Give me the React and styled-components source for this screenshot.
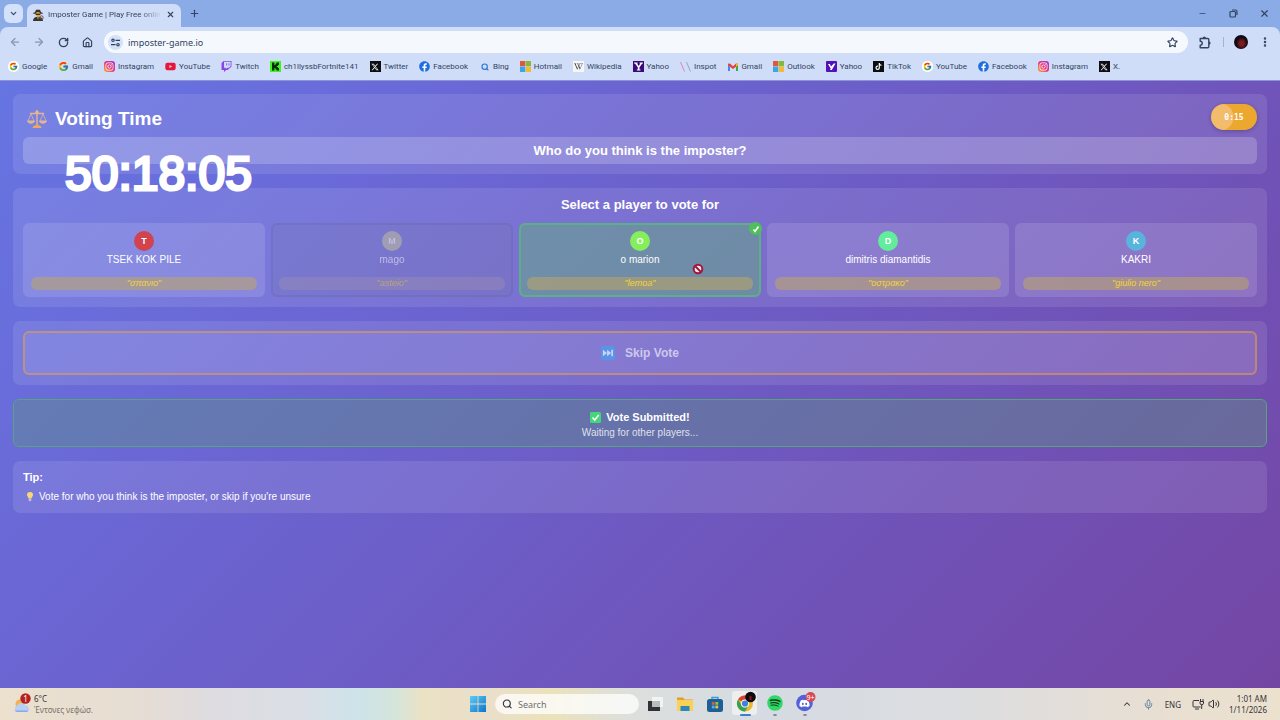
import React, { useState } from "react";
import styled, { createGlobalStyle, css } from "styled-components";
import { FcGoogle } from "react-icons/fc";
import {
  FaDiscord,
  FaFacebook,
  FaInstagram,
  FaSpotify,
  FaTiktok,
  FaTwitch,
  FaWikipediaW,
  FaYoutube,
} from "react-icons/fa";
import { FaXTwitter } from "react-icons/fa6";
import {
  ArrowLeft,
  ArrowRight,
  ChevronDown,
  ChevronUp,
  EllipsisVertical,
  House,
  Mic,
  Minus,
  Plus,
  RotateCw,
  Search,
  Star,
  Volume2,
  X,
} from "lucide-react";

const GlobalStyle = createGlobalStyle`
  * {
    box-sizing: border-box;
  }

  body {
    margin: 0;
    font-family: "Liberation Sans", Arial, sans-serif;
  }

  button,
  input {
    margin: 0;
    padding: 0;
    border: 0;
    background: none;
    color: inherit;
    font: inherit;
  }

  h1, h2, h3, p {
    margin: 0;
    padding: 0;
  }
`;

const Desktop = styled.div`
  min-height: 100vh;
  display: flex;
  flex-direction: column;
`;

/* browser window */

const BrowserChrome = styled.header`
  background-color: #8babe6;
  color: #33435f;
  font-family: Roboto, "Noto Sans", sans-serif;
  font-size: 8px;
`;

const TabStrip = styled.div`
  height: 27px;
  padding-left: 4px;
  display: flex;
  align-items: center;
`;

const TabSearch = styled.button`
  width: 19px;
  height: 19px;
  border-radius: 6px;
  background-color: #d3e1fa;
  display: grid;
  place-items: center;
`;

const Tab = styled.div`
  align-self: flex-end;
  width: 154px;
  height: 23px;
  margin-left: 4px;
  padding: 0 6px 2px 5px;
  border-radius: 7px 7px 0 0;
  background-color: #cfddf8;
  display: flex;
  align-items: center;
  gap: 4px;
`;

const TabTitle = styled.span`
  flex: 1;
  white-space: nowrap;
  mask-image: linear-gradient(90deg, #000 80%, transparent);
`;

const IconButton = styled.button`
  width: ${(props) => props.$width || 24}px;
  height: 24px;
  flex: none;
  display: grid;
  place-items: center;
  opacity: ${(props) => (props.disabled ? 0.45 : 1)};
`;

const TabClose = styled.button`
  display: grid;
  place-items: center;
`;

const WindowControls = styled.div`
  margin-left: auto;
  display: flex;
`;

const Toolbar = styled.div`
  height: 30px;
  padding: 0 3px;
  background-color: #cfddf8;
  border-radius: 8px 8px 0 0;
  display: flex;
  align-items: center;
`;

const AddressBar = styled.form`
  flex: 1;
  height: 22px;
  margin: 0 5px;
  padding: 0 10px 0 4px;
  border-radius: 11px;
  background-color: #f5f9fe;
  display: flex;
  align-items: center;
  gap: 5px;
`;

const SiteInfo = styled.span`
  width: 15px;
  height: 15px;
  border-radius: 50%;
  background-color: #d3e1f9;
  display: grid;
  place-items: center;
`;

const AddressInput = styled.input`
  flex: 1;
  font-family: "Noto Sans", sans-serif;
  font-size: 9px;
  outline: none;
`;

const Divider = styled.span`
  width: 1px;
  height: 10px;
  margin: 0 5px 0 6px;
  background-color: #9fb4d8;
`;

const ProfilePhoto = styled.span`
  width: 14px;
  height: 14px;
  border-radius: 50%;
  background: radial-gradient(ellipse at 55% 60%, #7a1b20 0 20%, #120a10 50%);
`;

const BookmarksBar = styled.nav`
  height: 24px;
  padding: 0 8px 4px;
  border-bottom: 1px solid #8c93d9;
  background-color: #cfddf8;
  display: flex;
  align-items: center;
  gap: 11px;
  overflow: hidden;
`;

const Bookmark = styled.a`
  display: flex;
  align-items: center;
  gap: 3px;
  color: inherit;
  text-decoration: none;
  white-space: nowrap;
`;

const Favicon = styled.span`
  width: 11px;
  height: 11px;
  flex: none;
  border-radius: ${(props) => props.$radius || 0}px;
  background: ${(props) => props.$bg || "transparent"};
  color: ${(props) => props.$color || "inherit"};
  display: grid;
  place-items: center;
`;

/* game page */

const Page = styled.main`
  flex: 1;
  padding: 13px;
  background: linear-gradient(
    135deg,
    #6675e2 0%,
    #6a6ad8 22%,
    #6c5fca 45%,
    #7053b8 70%,
    #7446a4 100%
  );
  color: #fff;
  display: flex;
  flex-direction: column;
  gap: 14px;
`;

const Panel = styled.section`
  padding: 10px;
  border-radius: 7px;
  background-color: rgba(255, 255, 255, 0.1);
`;

const TitleRow = styled.div`
  height: 26px;
  display: flex;
  justify-content: space-between;
  align-items: flex-end;
`;

const Title = styled.h1`
  padding-left: 4px;
  display: flex;
  align-items: center;
  gap: 8px;
  font-size: 19px;
  line-height: 23px;
`;

const Timer = styled.div`
  width: 46px;
  height: 26px;
  border-radius: 13px;
  background: radial-gradient(circle at 9px 13px, #f3bc6b 13px, #eca82e 14px);
  box-shadow: 0 1px 4px rgba(0, 0, 0, 0.25);
  font: bold 8px/27px "DejaVu Sans Mono", monospace;
  text-align: center;
`;

const Question = styled.p`
  margin-top: 7px;
  border-radius: 6px;
  background-color: rgba(255, 255, 255, 0.2);
  font-size: 13px;
  font-weight: bold;
  line-height: 27px;
  text-align: center;
`;

const SectionTitle = styled.h2`
  margin-bottom: 12px;
  font-size: 13px;
  line-height: 13px;
  text-align: center;
`;

const PlayerGrid = styled.div`
  display: grid;
  grid-template-columns: repeat(5, 1fr);
  gap: 6px;
`;

const PlayerCard = styled.button`
  position: relative;
  height: 74px;
  padding: 6px;
  border: 2px solid transparent;
  border-radius: 6px;
  background-color: rgba(255, 255, 255, 0.12);
  display: flex;
  flex-direction: column;
  align-items: center;

  ${(props) =>
    props.disabled &&
    css`
      border-color: rgba(90, 90, 140, 0.2);
      background-color: rgba(120, 120, 140, 0.14);
    `}

  ${(props) =>
    props.$selected &&
    css`
      border-color: #5bb183;
      background-color: rgba(100, 170, 130, 0.5);
    `}
`;

const CardBody = styled.span`
  width: 100%;
  display: flex;
  flex-direction: column;
  align-items: center;
  opacity: ${(props) => (props.$dim ? 0.5 : 1)};
`;

const Avatar = styled.span`
  width: 20px;
  height: 20px;
  border-radius: 50%;
  background-color: ${(props) => props.$color};
  font-size: 9px;
  font-weight: bold;
  line-height: 20px;
  text-align: center;
`;

const PlayerName = styled.span`
  margin-top: 3px;
  font-size: 10px;
  line-height: 12px;
`;

const Hint = styled.span`
  width: 100%;
  margin-top: 11px;
  border-radius: 6px;
  background-color: ${(props) =>
    props.$dim ? "rgba(190, 170, 150, 0.4)" : "rgba(190, 165, 100, 0.55)"};
  color: #f2d438;
  font-size: 9px;
  font-style: italic;
  line-height: 13px;
  text-align: center;
`;

const CheckBadge = styled.span`
  position: absolute;
  top: -3px;
  right: -3px;
  width: 13px;
  height: 13px;
  border-radius: 50%;
  background-color: #4fbf5c;
  display: grid;
  place-items: center;
`;

const BlockedCursor = styled.svg`
  position: absolute;
  left: 72%;
  top: 54%;
`;

const SkipButton = styled.button`
  width: 100%;
  height: 44px;
  border: 2px solid rgba(232, 156, 62, 0.55);
  border-radius: 6px;
  background-color: rgba(255, 255, 255, 0.08);
  color: rgba(255, 255, 255, 0.6);
  display: flex;
  justify-content: center;
  align-items: center;
  gap: 10px;
  font-size: 12px;
  font-weight: bold;
`;

const Submitted = styled.section`
  height: 48px;
  padding-top: 10px;
  border: 1px solid #56a57c;
  border-radius: 6px;
  background-color: rgba(94, 145, 130, 0.42);
  text-align: center;
`;

const SubmittedTitle = styled.h3`
  display: flex;
  justify-content: center;
  align-items: center;
  gap: 5px;
  font-size: 11px;
  line-height: 15px;
`;

const Waiting = styled.p`
  color: rgba(255, 255, 255, 0.8);
  font-size: 10px;
  line-height: 15px;
`;

const Tip = styled(Panel)`
  h3 {
    font-size: 11px;
    line-height: 13px;
  }

  p {
    margin-top: 6px;
    display: flex;
    align-items: center;
    gap: 4px;
    font-size: 10px;
    line-height: 13px;
  }
`;

const StreamClock = styled.div`
  position: absolute;
  left: 65px;
  top: 148px;
  color: #fff;
  font-size: 48px;
  line-height: 52px;
  -webkit-text-stroke: 3px #fff;
`;

/* taskbar */

const Taskbar = styled.footer`
  height: 32px;
  padding: 0 13px;
  background: linear-gradient(
    90deg,
    #ece1cd 0%,
    #e6ddd4 11%,
    #dedce1 17%,
    #dadfe6 24%,
    #cde3ea 28%,
    #d5e5da 31%,
    #ebe1c4 33%,
    #eadfca 38%,
    #ebe2bb 43%,
    #dcdfdc 49%,
    #d5dbe2 60%,
    #dcdde0 75%,
    #e8dfd3 90%,
    #ece1cd 100%
  );
  color: #33343a;
  font-family: "Noto Sans", sans-serif;
  font-size: 8px;
  line-height: 11px;
  display: grid;
  grid-template-columns: 1fr auto 1fr;
  align-items: center;
`;

const Weather = styled.div`
  display: flex;
  align-items: center;
  gap: 3px;

  small {
    display: block;
    color: #77726c;
    font-size: 8px;
  }
`;

const Apps = styled.div`
  padding-left: 2px;
  display: flex;
  align-items: center;
`;

const SearchBox = styled.label`
  width: 144px;
  height: 20px;
  margin: 0 1px 0 2px;
  padding: 0 7px;
  border-radius: 10px;
  background-color: rgba(255, 255, 255, 0.75);
  display: flex;
  align-items: center;
  gap: 6px;

  input {
    width: 100%;
    font-size: 9px;
    outline: none;
  }

  input::placeholder {
    color: #6d6f72;
    opacity: 1;
  }
`;

const AppButton = styled.button`
  width: 30px;
  height: 28px;
  display: grid;
  place-items: center;
`;

const Tray = styled.div`
  display: flex;
  justify-content: flex-end;
  align-items: center;
`;

const TrayItem = styled.span`
  margin-right: ${(props) => props.$gap}px;
  display: grid;
`;

const Clock = styled.time`
  text-align: right;
`;

/* drawings */

const ImposterIcon = () => (
  <svg width="12" height="12" viewBox="0 0 12 12">
    <path d="M3 3.2 4 .8h4l1 2.4 2 .8-.4.7H1.4L1 4z" fill="#3a332b" />
    <circle cx="6" cy="5.4" r="2.3" fill="#e6ab3d" />
    <path d="M3.6 4.7h4.8v1.2H3.6z" fill="#27231f" />
    <path d="M1 12c0-3 2-4.2 5-4.2S11 9 11 12z" fill="#37352f" />
    <path d="M5 8h2l-1 3z" fill="#b88d3f" />
    <circle cx="9.5" cy="8.5" r="1.7" fill="none" stroke="#6a573b" />
  </svg>
);

const RestoreIcon = () => (
  <svg width="9" height="9" viewBox="0 0 9 9" fill="none" stroke="currentColor" strokeWidth="1.2">
    <rect x="1" y="2.5" width="5.5" height="5.5" rx="1" />
    <path d="M3 1h3.500A1.500 1.500 0 0 1 8 2.500V6" />
  </svg>
);

const TuneIcon = () => (
  <svg width="9" height="9" viewBox="0 0 9 9" fill="none" stroke="currentColor" strokeWidth="1.2">
    <circle cx="2" cy="2.300" r="1.200" />
    <path d="M4.500 2.300H9M0 6.700h4.500" />
    <circle cx="7" cy="6.700" r="1.200" />
  </svg>
);

const ExtensionIcon = () => (
  <svg width="12" height="13" viewBox="0 0 12 13" fill="none" stroke="currentColor" strokeWidth="1.4">
    <path d="M1.200 2.500h7.600a1 1 0 0 1 1 1v7.300a1 1 0 0 1-1 1H1.200V9.200a2 2 0 0 0 0-4z" strokeLinejoin="round" />
    <path d="M3.700 2a1.600 1.600 0 0 1 3.200 0zM10 5.500a1.600 1.600 0 0 1 0 3.200z" fill="currentColor" stroke="none" />
  </svg>
);

const KickLogo = () => (
  <svg width="11" height="11" viewBox="0 0 11 11">
    <path d="M0 0h11v11H0z" fill="#3df51d" />
    <path d="M2 1.5h2.4V4h1V2.8h1V1.5H9V4H8v1H6.800v1H8v1h1v2.500H6.400V8.200h-1V7h-1v2.500H2z" fill="#0b2b07" />
  </svg>
);

const YahooLogo = () => (
  <svg width="11" height="11" viewBox="0 0 11 11">
    <path d="M0 0h11v11H0z" fill="#3a0a78" />
    <path d="M1 1.500h3.600v.9h-.6l1.700 2.700 1.600-2.700h-.7v-.9H10v.9h-.8L6.500 6.300v2.300h1v.9H3.800v-.9h1V6.300L2 2.400H1z" fill="#fff" />
  </svg>
);

const YahooMailLogo = () => (
  <svg width="11" height="11" viewBox="0 0 11 11">
    <rect width="11" height="11" rx="1" fill="#5312b8" />
    <path d="M2 3h1.800l1.300 2.400L7.800 2.500h1.700l-3.700 6.500H4l.7-1.600z" fill="#fff" />
  </svg>
);

const MicrosoftLogo = () => (
  <svg width="11" height="11" viewBox="0 0 11 11">
    <path d="M0 0h5.300v5.300H0z" fill="#e0583b" />
    <path d="M5.700 0H11v5.300H5.700z" fill="#86b83a" />
    <path d="M0 5.700h5.300V11H0z" fill="#3aa6e6" />
    <path d="M5.700 5.700H11V11H5.700z" fill="#f2ba3a" />
  </svg>
);

const GmailLogo = () => (
  <svg width="10" height="8" viewBox="0 0 10 8">
    <path d="M0 1.500V8h2V3.500z" fill="#4285f4" />
    <path d="M10 1.500V8H8V3.500z" fill="#34a853" />
    <path d="M0 .8 2 .6l3 2.600L8 .6l2 .2v1.500L5 6 0 2.300z" fill="#e2443a" />
    <path d="M8 .6l2 .2v1.500L8 3.700z" fill="#f5b81f" />
  </svg>
);

const InspotLogo = () => (
  <svg width="11" height="11" viewBox="0 0 11 11" fill="none">
    <path d="M.5 1 4.500 10.500" stroke="#d48bb8" />
    <path d="M6.500 1l4 9.500" stroke="#9aa2c6" />
  </svg>
);

const ScalesIcon = () => (
  <svg width="20" height="20" viewBox="0 0 20 20" fill="none" stroke="#e6b48f">
    <path d="M10 1v15M3 4.500h14" strokeWidth="1.400" />
    <circle cx="10" cy="3.500" r="1.500" fill="#e6b48f" />
    <path d="M4 5 1 12M4 5l3 7M16 5l-3 7M16 5l3 7" strokeWidth=".8" />
    <path d="M.5 12h7c-.5 3-6.500 3-7 0zM12.500 12h7c-.5 3-6.500 3-7 0z" fill="#d9b3b0" />
    <path d="M5.500 19c0-2 2-3 4.500-3s4.500 1 4.500 3z" fill="#f0a95b" stroke="none" />
  </svg>
);

const SkipIcon = () => (
  <svg width="14" height="14" viewBox="0 0 15 15">
    <rect width="15" height="15" rx="2" fill="#5b93e6" />
    <path d="M2 4l4.500 3.500L2 11zM6.500 4 11 7.500 6.500 11zM11 4h1.800v7H11z" fill="#c6d4f5" />
  </svg>
);

const GreenCheck = () => (
  <svg width="11" height="11" viewBox="0 0 11 11">
    <rect width="11" height="11" rx="1.500" fill="#45d67c" />
    <path d="M2.500 5.500 4.700 8l4-5" fill="none" stroke="#fff" strokeWidth="1.500" />
  </svg>
);

const BulbIcon = () => (
  <svg width="12" height="11" viewBox="0 0 12 11">
    <path d="M7 1a3 3 0 0 1 3 3c0 1.500-1.500 2-1.500 3.500h-3C5.500 6 4 5.500 4 4a3 3 0 0 1 3-3z" fill="#f7d873" />
    <path d="M5.700 7.500h2.600V9.500l-1.300 1-1.300-1z" fill="#c9c3d4" />
  </svg>
);

const WeatherIcon = () => (
  <svg width="18" height="22" viewBox="0 0 18 22">
    <circle cx="7" cy="11" r="4.500" fill="#f0b145" />
    <path d="M4 19a3.500 3.500 0 0 1 0-6.500 4.500 4.500 0 0 1 8 0 3.300 3.300 0 0 1 1.500 6.500z" fill="#b7cff5" />
    <path d="M4 19a3 3 0 0 1-2.500-1.500h14A3 3 0 0 1 13.500 19z" fill="#86a9e8" />
    <circle cx="12.500" cy="5.500" r="5.200" fill="#b5211f" />
    <text x="12.500" y="8.500" fill="#fff" fontSize="8" textAnchor="middle">1</text>
  </svg>
);

const WindowsLogo = () => (
  <svg width="16" height="16" viewBox="0 0 16 16">
    <defs>
      <linearGradient id="win" x2="1" y2="1">
        <stop stopColor="#5ecbf5" />
        <stop offset="1" stopColor="#0f74c8" />
      </linearGradient>
    </defs>
    <path d="M0 0h7.600v7.600H0zM8.400 0H16v7.600H8.400zM0 8.400h7.600V16H0zM8.400 8.400H16V16H8.400z" fill="url(#win)" />
  </svg>
);

const TaskViewIcon = () => (
  <svg width="16" height="16" viewBox="0 0 16 16">
    <path d="M5 1h11v10H5z" fill="#f2f3f4" />
    <path d="M1 5h4v6h8v4H1z" fill="#303236" />
    <path d="M5 5h8v6H5z" fill="#b9bdc0" />
  </svg>
);

const FolderIcon = () => (
  <svg width="18" height="16" viewBox="0 0 18 16">
    <path d="M1 1.500h6l1.500 2H17v4H1z" fill="#dfa02c" />
    <path d="M1 4h16v11H1z" fill="#f8d155" />
    <path d="M4.500 10h9v5h-9z" fill="#2d87bd" />
  </svg>
);

const StoreIcon = () => (
  <svg width="16" height="17" viewBox="0 0 16 17">
    <path d="M5 4V1.500h6V4" fill="none" stroke="#3b9ad6" strokeWidth="1.400" />
    <rect y="3" width="16" height="13" rx="2.500" fill="#1e5f96" />
    <path d="M4.800 6h2.800v2.800H4.800z" fill="#e5573c" />
    <path d="M8.400 6h2.800v2.800H8.400z" fill="#8dc63f" />
    <path d="M4.800 9.600h2.800v2.800H4.800z" fill="#45b4ec" />
    <path d="M8.400 9.600h2.800v2.800H8.400z" fill="#f7c03d" />
  </svg>
);

const ChromeIcon = () => (
  <svg width="26" height="26" viewBox="0 0 26 26">
    <rect width="25" height="24" rx="3" fill="#f4f3f3" fillOpacity=".8" />
    <circle cx="13" cy="12.500" r="8" fill="#e8b92f" />
    <path d="M13 12.500 6.070 8.500A8 8 0 0 1 19.930 8.500H13z" fill="#dc4535" />
    <path d="M13 20.500A8 8 0 0 1 6.070 8.500l3.460 6a4 4 0 0 0 6.930 0z" fill="#35a152" />
    <circle cx="13" cy="12.500" r="4" fill="#f5f5f5" />
    <circle cx="13" cy="12.500" r="3.100" fill="#3f7fe0" />
    <circle cx="18.500" cy="6" r="5.300" fill="#120a0c" />
    <path d="M17.500 5h2v4h-2z" fill="#7c1c20" />
    <path d="M9 24h9" stroke="#3a7fd0" strokeWidth="2" strokeLinecap="round" />
  </svg>
);

const SpotifyIcon = () => (
  <svg width="26" height="26" viewBox="0 0 26 26">
    <circle cx="13" cy="12" r="7" fill="#123c20" />
    <FaSpotify x="5" y="4" size={16} color="#2fd765" />
    <path d="M12 24h2" stroke="#6c7176" strokeWidth="1.600" strokeLinecap="round" />
  </svg>
);

const DiscordIcon = () => (
  <svg width="26" height="26" viewBox="0 0 26 26">
    <circle cx="12.500" cy="12" r="8.300" fill="#5560d8" />
    <FaDiscord x="7" y="7" size={11} color="#fff" />
    <circle cx="18.500" cy="6" r="5" fill="#d34a55" />
    <text x="18.500" y="8.500" fill="#fff" fontSize="7" textAnchor="middle">9+</text>
    <path d="M12 24h2" stroke="#6c7176" strokeWidth="1.600" strokeLinecap="round" />
  </svg>
);

const NetworkIcon = () => (
  <svg width="12" height="12" viewBox="0 0 12 12" fill="none" stroke="currentColor">
    <path d="M7 2.500H2a1 1 0 0 0-1 1v4.500a1 1 0 0 0 1 1h6.500M3 11h4" />
    <path d="M8.500 1v2.500M11 1v2.500M8 3.500h3.500v1.500a1.700 1.700 0 0 1-3.500 0zM9.700 6.500V11" />
  </svg>
);

const instagramBg = "linear-gradient(45deg, #f9b23c, #e8357c 50%, #9838d8)";

const favicons = {
  google: (
    <Favicon $bg="#fff" $radius={5}>
      <FcGoogle size={9} />
    </Favicon>
  ),
  gmailG: (
    <Favicon>
      <FcGoogle size={11} />
    </Favicon>
  ),
  instagram: (
    <Favicon $bg={instagramBg} $radius={3} $color="#fff">
      <FaInstagram size={9} />
    </Favicon>
  ),
  youtube: (
    <Favicon $color="#e8173a">
      <FaYoutube size={11} />
    </Favicon>
  ),
  twitch: (
    <Favicon $color="#8a45e6">
      <FaTwitch size={11} />
    </Favicon>
  ),
  kick: (
    <Favicon>
      <KickLogo />
    </Favicon>
  ),
  x: (
    <Favicon $bg="#0c0d10" $color="#e8eaee">
      <FaXTwitter size={8} />
    </Favicon>
  ),
  facebook: (
    <Favicon $bg="radial-gradient(#fff 50%, transparent 52%)" $color="#1d6fe0">
      <FaFacebook size={11} />
    </Favicon>
  ),
  bing: (
    <Favicon $color="#2f77d8">
      <Search size={8} strokeWidth={3.5} />
    </Favicon>
  ),
  microsoft: (
    <Favicon>
      <MicrosoftLogo />
    </Favicon>
  ),
  wikipedia: (
    <Favicon $bg="#f5f6f8" $color="#2b2b2b">
      <FaWikipediaW size={9} />
    </Favicon>
  ),
  yahoo: (
    <Favicon>
      <YahooLogo />
    </Favicon>
  ),
  yahooMail: (
    <Favicon>
      <YahooMailLogo />
    </Favicon>
  ),
  inspot: (
    <Favicon>
      <InspotLogo />
    </Favicon>
  ),
  gmail: (
    <Favicon>
      <GmailLogo />
    </Favicon>
  ),
  tiktok: (
    <Favicon $bg="#0c0d10" $color="#fff">
      <FaTiktok size={7} />
    </Favicon>
  ),
};

const bookmarks = [
  ["google", "Google"],
  ["gmailG", "Gmail"],
  ["instagram", "Instagram"],
  ["youtube", "YouTube"],
  ["twitch", "Twitch"],
  ["kick", "ch1llyssbFortnite141"],
  ["x", "Twitter"],
  ["facebook", "Facebook"],
  ["bing", "Bing"],
  ["microsoft", "Hotmail"],
  ["wikipedia", "Wikipedia"],
  ["yahoo", "Yahoo"],
  ["inspot", "Inspot"],
  ["gmail", "Gmail"],
  ["microsoft", "Outlook"],
  ["yahooMail", "Yahoo"],
  ["tiktok", "TikTok"],
  ["google", "YouTube"],
  ["facebook", "Facebook"],
  ["instagram", "Instagram"],
  ["x", "X."],
];

const players = [
  { name: "TSEK KOK PILE", initial: "T", color: "#d1434f", hint: "σπανιο" },
  { name: "mago", initial: "M", color: "#c8c49a", hint: "asteio", self: true },
  { name: "o marion", initial: "O", color: "#86ee5c", hint: "lemoa" },
  { name: "dimitris diamantidis", initial: "D", color: "#62ec9c", hint: "οστρακο" },
  { name: "KAKRI", initial: "K", color: "#58b4dc", hint: "giulio nero" },
];

const Browser = () => {
  const [address, setAddress] = useState("imposter-game.io");
  return (
    <BrowserChrome>
      <TabStrip>
        <TabSearch aria-label="Search tabs">
          <ChevronDown size={9} strokeWidth={3} />
        </TabSearch>
        <Tab>
          <ImposterIcon />
          <TabTitle>Imposter Game | Play Free onlin</TabTitle>
          <TabClose aria-label="Close tab">
            <X size={9} strokeWidth={3} />
          </TabClose>
        </Tab>
        <IconButton aria-label="New tab" $width={26}>
          <Plus size={11} strokeWidth={2.5} />
        </IconButton>
        <WindowControls>
          <IconButton aria-label="Minimize" $width={31}>
            <Minus size={9} />
          </IconButton>
          <IconButton aria-label="Restore" $width={31}>
            <RestoreIcon />
          </IconButton>
          <IconButton aria-label="Close" $width={31}>
            <X size={11} strokeWidth={2.5} />
          </IconButton>
        </WindowControls>
      </TabStrip>
      <Toolbar>
        <IconButton aria-label="Back" disabled>
          <ArrowLeft size={12} strokeWidth={2.5} />
        </IconButton>
        <IconButton aria-label="Forward" disabled>
          <ArrowRight size={12} strokeWidth={2.5} />
        </IconButton>
        <IconButton aria-label="Reload">
          <RotateCw size={11} strokeWidth={3} />
        </IconButton>
        <IconButton aria-label="Home">
          <House size={11} strokeWidth={2.5} />
        </IconButton>
        <AddressBar onSubmit={(e) => e.preventDefault()}>
          <SiteInfo>
            <TuneIcon />
          </SiteInfo>
          <AddressInput
            aria-label="Address"
            value={address}
            onChange={(e) => setAddress(e.target.value)}
          />
          <Star size={11} strokeWidth={2.5} />
        </AddressBar>
        <IconButton aria-label="Extensions">
          <ExtensionIcon />
        </IconButton>
        <Divider />
        <IconButton aria-label="Profile">
          <ProfilePhoto />
        </IconButton>
        <IconButton aria-label="Menu">
          <EllipsisVertical size={12} strokeWidth={3} />
        </IconButton>
      </Toolbar>
      <BookmarksBar>
        {bookmarks.map(([icon, label], index) => (
          <Bookmark href="#" key={index}>
            {favicons[icon]}
            {label}
          </Bookmark>
        ))}
      </BookmarksBar>
    </BrowserChrome>
  );
};

const Player = ({ player, selected, onSelect }) => (
  <PlayerCard
    disabled={player.self}
    $selected={selected}
    aria-pressed={selected}
    onClick={onSelect}
  >
    <CardBody $dim={player.self}>
      <Avatar $color={player.color}>{player.initial}</Avatar>
      <PlayerName>{player.name}</PlayerName>
      <Hint $dim={player.self}>"{player.hint}"</Hint>
    </CardBody>
    {selected && (
      <>
        <CheckBadge>
          <svg width="8" height="8" viewBox="0 0 8 8">
            <path d="M1.500 4.500 3 6.500 6.500 1.500" fill="none" stroke="#fff" strokeWidth="1.500" />
          </svg>
        </CheckBadge>
        <BlockedCursor width="12" height="12" viewBox="0 0 12 12">
          <circle cx="6" cy="6" r="4.300" fill="#f6eef2" stroke="#a3163c" strokeWidth="2" />
          <path d="M3 3l6 6" stroke="#a3163c" strokeWidth="2" />
        </BlockedCursor>
      </>
    )}
  </PlayerCard>
);

const VotingPage = () => {
  const [vote, setVote] = useState("o marion");
  return (
    <Page>
      <Panel>
        <TitleRow>
          <Title>
            <ScalesIcon />
            Voting Time
          </Title>
          <Timer>0:15</Timer>
        </TitleRow>
        <Question>Who do you think is the imposter?</Question>
      </Panel>
      <Panel>
        <SectionTitle>Select a player to vote for</SectionTitle>
        <PlayerGrid>
          {players.map((player) => (
            <Player
              key={player.name}
              player={player}
              selected={player.name === vote}
              onSelect={() => setVote(player.name)}
            />
          ))}
        </PlayerGrid>
      </Panel>
      <Panel>
        <SkipButton>
          <SkipIcon />
          Skip Vote
        </SkipButton>
      </Panel>
      <Submitted>
        <SubmittedTitle>
          <GreenCheck />
          Vote Submitted!
        </SubmittedTitle>
        <Waiting>Waiting for other players...</Waiting>
      </Submitted>
      <Tip>
        <h3>Tip:</h3>
        <p>
          <BulbIcon />
          Vote for who you think is the imposter, or skip if you're unsure
        </p>
      </Tip>
    </Page>
  );
};

const SystemTaskbar = () => (
  <Taskbar>
    <Weather>
      <WeatherIcon />
      <span>
        6°C
        <small>Έντονες νεφώσ.</small>
      </span>
    </Weather>
    <Apps>
      <AppButton aria-label="Start">
        <WindowsLogo />
      </AppButton>
      <SearchBox>
        <Search size={12} strokeWidth={2.5} />
        <input aria-label="Search" placeholder="Search" />
      </SearchBox>
      <AppButton aria-label="Task view">
        <TaskViewIcon />
      </AppButton>
      <AppButton aria-label="File Explorer">
        <FolderIcon />
      </AppButton>
      <AppButton aria-label="Store">
        <StoreIcon />
      </AppButton>
      <AppButton aria-label="Chrome">
        <ChromeIcon />
      </AppButton>
      <AppButton aria-label="Spotify">
        <SpotifyIcon />
      </AppButton>
      <AppButton aria-label="Discord">
        <DiscordIcon />
      </AppButton>
    </Apps>
    <Tray>
      <TrayItem $gap={11}>
        <ChevronUp size={10} strokeWidth={2.5} />
      </TrayItem>
      <TrayItem $gap={11}>
        <Mic size={11} color="#5b7c9c" />
      </TrayItem>
      <TrayItem $gap={11}>ENG</TrayItem>
      <TrayItem $gap={4}>
        <NetworkIcon />
      </TrayItem>
      <TrayItem $gap={9}>
        <Volume2 size={12} />
      </TrayItem>
      <Clock>
        1:01 AM
        <br />
        1/11/2026
      </Clock>
    </Tray>
  </Taskbar>
);

const App = () => (
  <>
    <GlobalStyle />
    <Desktop>
      <Browser />
      <VotingPage />
      <SystemTaskbar />
    </Desktop>
    <StreamClock>50:18:05</StreamClock>
  </>
);

export default App;
